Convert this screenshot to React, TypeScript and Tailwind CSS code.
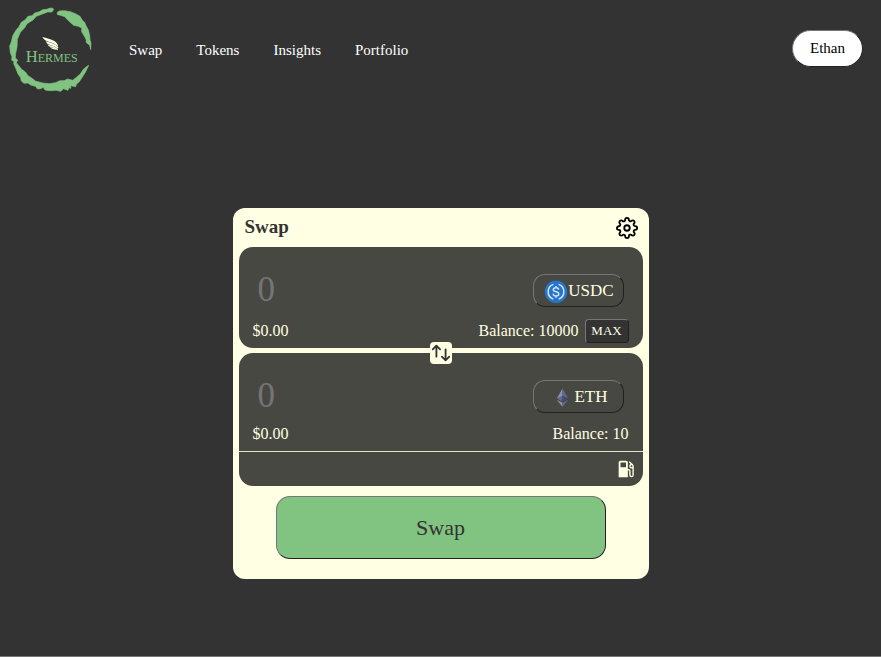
import React, { useState } from "react";
import { FiSettings } from "react-icons/fi";
import { HiOutlineSwitchVertical } from "react-icons/hi";
import { MdLocalGasStation } from "react-icons/md";

const raised =
  "border border-t-[#767676] border-l-[#767676] border-r-[#212121] border-b-[#212121]";

function Logo() {
  return (
    <svg viewBox="0 0 330 300" className="h-[100px] w-[110px] shrink-0" role="img" aria-label="Hermes">
      <g fill="#81c380" stroke="#81c380" strokeWidth="2">
        <path d="M161 28 L157 24 L148 25 L140 28 L128 29 L118 35 L104 39 L96 47 L84 49 L76 59 L64 67 L57 80 L47 92 L38 108 L34 126 L29 138 L31 158 L36 170 L35 181 L42 184 L41 191 L47 204 L54 222 L62 233 L64 243 L72 250 L84 249 L92 255 L106 259 L113 267 L122 266 L130 262 L135 270 L150 272 L168 271 L183 274 L190 266 L204 271 L207 263 L213 265 L212 257 L227 260 L229 253 L238 245 L247 231 L256 217 L266 196 L261 199 L250 208 L241 222 L228 233 L218 241 L203 237 L192 242 L180 242 L166 248 L148 251 L128 249 L106 243 L96 235 L84 227 L76 216 L64 207 L54 194 L49 188 L53 180 L46 174 L47 160 L51 142 L52 118 L61 97 L74 83 L81 71 L99 60 L109 49 L127 42 L143 36 L156 36 Z" />
        <path d="M171 38 L178 33 L193 32 L211 35 L226 41 L240 49 L247 61 L254 67 L258 77 L265 90 L269 106 L270 120 L273 130 L272 149 L269 136 L258 127 L259 120 L251 105 L245 95 L245 84 L235 79 L221 76 L207 64 L194 50 L182 46 L173 44 Z" />
      </g>
      <g fill="#ffffe3">
        <path d="M127 111 C139 114 153 117 163 123 C170 127 175 135 174 140 C164 129 149 127 140 123 C134 120 130 116 127 111 Z" />
        <path d="M137 124 C150 128 165 130 175 142 L174 146 C162 136 148 135 142 131 Z" />
        <path d="M142 134 C154 136 166 138 174 148 L172 151 C163 143 152 142 147 139 Z" />
        <path d="M149 142 C158 143 165 144 170 149 C162 149 155 147 149 142 Z" />
      </g>
      <text
        x="77"
        y="187"
        fill="#81c380"
        className="font-['Liberation_Serif',serif] text-[50px] [font-variant:small-caps]"
      >
        Hermes
      </text>
    </svg>
  );
}

function UsdcIcon() {
  return (
    <svg viewBox="0 0 32 32" className="size-6 shrink-0" aria-hidden="true">
      <circle cx="16" cy="17" r="15" fill="#2775ca" />
      <g fill="none" stroke="#d5e5f7" strokeWidth="2">
        <path d="M12.5 7.200a10.400 10.400 0 0 0 0 19.600M19.500 7.200a10.400 10.400 0 0 1 0 19.600" />
        <path d="M19.600 14.200c-.3-1.700-1.600-2.500-3.600-2.500-2.100 0-3.600 1-3.600 2.600 0 3.900 7.300 1.700 7.300 5.600 0 1.700-1.500 2.700-3.700 2.700-2.300 0-3.600-1.100-3.800-2.900M16 9.200v2.500M16 22.500v2.500" />
      </g>
    </svg>
  );
}

function EthIcon() {
  return (
    <svg viewBox="0 0 24 24" className="size-6 shrink-0" aria-hidden="true">
      <path d="M12.500 3.500 6.800 13.500 12.500 11Z" fill="#8a92b2" />
      <path d="M12.500 3.500v7.500l5.700 2.500Z" fill="#62688f" />
      <path d="M6.800 13.500 12.500 11V16.500Z" fill="#62688f" />
      <path d="M12.500 11V16.500l5.700-3Z" fill="#454a75" />
      <path d="M6.800 14.700 12.500 22v-4.200Z" fill="#8a92b2" />
      <path d="M12.500 17.800v4.200l5.700-7.300Z" fill="#62688f" />
    </svg>
  );
}

function AmountRow({ label, token, icon }: { label: string; token: string; icon: React.ReactNode }) {
  return (
    <div className="flex items-center justify-between px-[5px]">
      <input
        type="text"
        inputMode="decimal"
        placeholder="0"
        aria-label={label}
        className="mb-0.5 h-[31px] w-40 bg-transparent text-[35px] leading-[31px] text-[#ffffe3] outline-none placeholder:text-[#757575]"
      />
      <button
        type="button"
        className={`flex h-[33px] w-[91px] items-center justify-center rounded-xl pl-0.5 text-[17px] text-[#ffffe3] ${raised}`}
      >
        {icon}
        {token}
      </button>
    </div>
  );
}

export default function App() {
  const [flipped, setFlipped] = useState(false);
  const usdc = { token: "USDC", icon: <UsdcIcon /> };
  const eth = { token: "ETH", icon: <EthIcon /> };
  const [from, to] = flipped ? [eth, usdc] : [usdc, eth];

  return (
    <div className="flex min-h-screen flex-col border-b border-[#767676] bg-[#333333] font-['Liberation_Serif','Times_New_Roman',serif] text-base">
      <header className="flex items-center justify-between pr-[18px]">
        <div className="flex items-center gap-[19px]">
          <Logo />
          <nav className="flex gap-[34px] text-[15px] text-white">
            <a href="#swap">Swap</a>
            <a href="#tokens">Tokens</a>
            <a href="#insights">Insights</a>
            <a href="#portfolio">Portfolio</a>
          </nav>
        </div>
        <button
          type="button"
          className={`mb-1 h-[37px] rounded-full bg-white px-[17px] text-[15px] text-black ${raised}`}
        >
          Ethan
        </button>
      </header>

      <main className="flex justify-center px-4 pt-[108px]">
        <section className="w-full max-w-[416px] rounded-xl bg-[#ffffe3] px-1.5 pb-5 text-[#ffffe3]">
          <div className="flex h-[39px] items-center justify-between pr-[5px] pl-1.5">
            <h1 className="text-[19px] font-bold text-[#333333]">Swap</h1>
            <button type="button" aria-label="Settings" className="text-black">
              <FiSettings size={22} />
            </button>
          </div>

          <div className="relative flex flex-col gap-[5px]">
            <div className="flex flex-col gap-3 rounded-[14px] bg-[#484842] px-3.5 pt-[27px] pb-[5px]">
              <AmountRow label="Amount to sell" {...from} />
              <div className="flex h-6 items-center justify-between">
                <span>$0.00</span>
                <span className="flex items-center gap-1.5">
                  Balance: 10000
                  <button
                    type="button"
                    className={`h-6 w-11 rounded bg-[#333333] text-[13px] leading-5 ${raised}`}
                  >
                    MAX
                  </button>
                </span>
              </div>
            </div>

            <button
              type="button"
              aria-label="Switch tokens"
              onClick={() => setFlipped(!flipped)}
              className="absolute top-[95px] left-1/2 flex size-[22px] -translate-x-1/2 items-center justify-center rounded bg-[#ffffe3] text-[#333333]"
            >
              <HiOutlineSwitchVertical size={22} />
            </button>

            <div className="rounded-[14px] bg-[#484842]">
              <div className="flex flex-col gap-[9px] px-3.5 pt-[27px] pb-[5px]">
                <AmountRow label="Amount to buy" {...to} />
                <div className="flex h-6 items-center justify-between">
                  <span>$0.00</span>
                  <span>Balance: 10</span>
                </div>
              </div>
              <div className="flex h-[35px] items-center justify-end border-t border-[#e6e6cd] pr-1.5">
                <MdLocalGasStation size={22} />
              </div>
            </div>
          </div>

          <button
            type="button"
            className={`mx-auto mt-2.5 block h-[63px] w-[330px] max-w-full rounded-[14px] bg-[#81c380] text-[22px] text-[#333333] ${raised}`}
          >
            Swap
          </button>
        </section>
      </main>
    </div>
  );
}
